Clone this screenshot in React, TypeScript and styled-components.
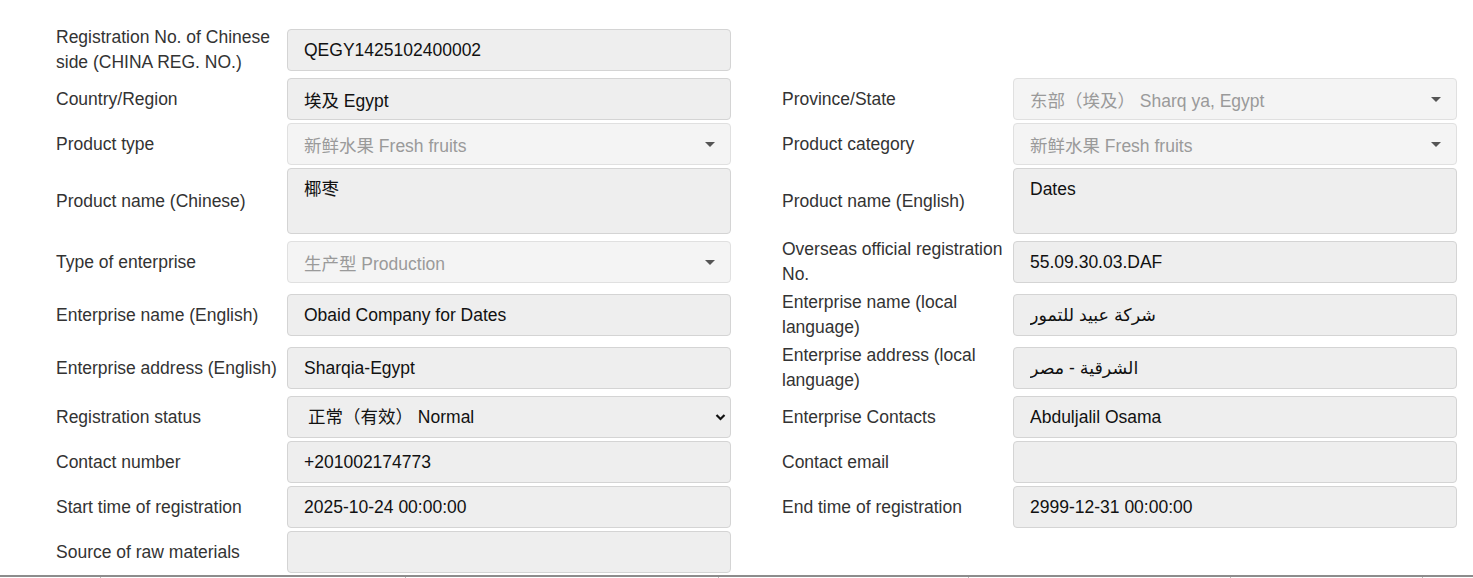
import styled, { createGlobalStyle } from 'styled-components';

const GlobalStyle = createGlobalStyle`
  html, body {
    margin: 0;
    padding: 0;
    background: #fff;
    overflow: hidden;
  }
  body {
    font-family: "Liberation Sans", Arial, "Noto Sans CJK SC", "DejaVu Sans", sans-serif;
    font-size: 17.5px;
    color: #333;
  }
`;

const Page = styled.div`
  height: 578px;
  overflow: hidden;
`;

const Form = styled.div`
  display: grid;
  grid-template-columns: 675px 675px;
  column-gap: 51px;
  row-gap: 3px;
  padding: 25px 0 0 56px;
`;

const Pair = styled.div`
  display: grid;
  grid-template-columns: 231px 444px;
  align-items: center;
`;

const Label = styled.div`
  line-height: 25px;
  padding-right: 6px;
  color: #333;
`;

const Field = styled.input<{ $muted?: boolean }>`
  box-sizing: border-box;
  width: 100%;
  height: 42px;
  margin: 0;
  padding: 0 16px;
  font: inherit;
  color: ${(p) => (p.$muted ? '#9a9a9a' : '#111')};
  background: ${(p) => (p.$muted ? '#f4f4f4' : '#eeeeee')};
  border: 1px solid ${(p) => (p.$muted ? '#e0e0e0' : '#d4d4d4')};
  border-radius: 4px;
  outline: none;
`;

const Area = styled.textarea`
  box-sizing: border-box;
  display: block;
  width: 100%;
  height: 66px;
  margin: 0;
  padding: 10px 16px;
  font: inherit;
  line-height: 20px;
  color: #111;
  background: #eeeeee;
  border: 1px solid #d4d4d4;
  border-radius: 4px;
  resize: none;
  outline: none;
`;

const DropWrap = styled.div`
  position: relative;
`;

const Caret = styled.span`
  position: absolute;
  right: 16px;
  top: 50%;
  margin-top: -2px;
  width: 0;
  height: 0;
  border-left: 5px solid transparent;
  border-right: 5px solid transparent;
  border-top: 5px solid #555;
  pointer-events: none;
`;

const Chevron = styled.svg`
  position: absolute;
  right: 5px;
  top: 50%;
  margin-top: -5px;
  pointer-events: none;
`;

const NativeSelect = styled.select`
  box-sizing: border-box;
  width: 100%;
  height: 42px;
  margin: 0;
  padding: 0 30px 0 20px;
  font: inherit;
  color: #111;
  background: #eeeeee;
  border: 1px solid #d4d4d4;
  border-radius: 4px;
  appearance: none;
  outline: none;
`;

const Strip = styled.div`
  display: grid;
  grid-template-columns: 100px 305px 313px 250px 262px 192px 51px;
  margin-top: 2px;
  border-top: 2px solid #8c8c8c;
  color: #333;
  font-size: 15px;
  line-height: 20px;
`;

const StripCell = styled.div<{ $first?: boolean }>`
  padding: 2px 12px;
  border-left: ${(p) => (p.$first ? 'none' : '1px solid #bbb')};
  white-space: nowrap;
  overflow: hidden;
`;

type Cell =
  | { kind: 'input'; label: string; value: string }
  | { kind: 'drop'; label: string; value: string }
  | { kind: 'native'; label: string; value: string }
  | { kind: 'area'; label: string; value: string }
  | null;

const rows: [Cell, Cell][] = [
  [{ kind: 'input', label: 'Registration No. of Chinese side (CHINA REG. NO.)', value: 'QEGY1425102400002' }, null],
  [
    { kind: 'input', label: 'Country/Region', value: '埃及 Egypt' },
    { kind: 'drop', label: 'Province/State', value: '东部（埃及） Sharq ya, Egypt' },
  ],
  [
    { kind: 'drop', label: 'Product type', value: '新鲜水果 Fresh fruits' },
    { kind: 'drop', label: 'Product category', value: '新鲜水果 Fresh fruits' },
  ],
  [
    { kind: 'area', label: 'Product name (Chinese)', value: '椰枣' },
    { kind: 'area', label: 'Product name (English)', value: 'Dates' },
  ],
  [
    { kind: 'drop', label: 'Type of enterprise', value: '生产型 Production' },
    { kind: 'input', label: 'Overseas official registration No.', value: '55.09.30.03.DAF' },
  ],
  [
    { kind: 'input', label: 'Enterprise name (English)', value: 'Obaid Company for Dates' },
    { kind: 'input', label: 'Enterprise name (local language)', value: 'شركة عبيد للتمور' },
  ],
  [
    { kind: 'input', label: 'Enterprise address (English)', value: 'Sharqia-Egypt' },
    { kind: 'input', label: 'Enterprise address (local language)', value: 'الشرقية - مصر' },
  ],
  [
    { kind: 'native', label: 'Registration status', value: '正常（有效） Normal' },
    { kind: 'input', label: 'Enterprise Contacts', value: 'Abduljalil Osama' },
  ],
  [
    { kind: 'input', label: 'Contact number', value: '+201002174773' },
    { kind: 'input', label: 'Contact email', value: '' },
  ],
  [
    { kind: 'input', label: 'Start time of registration', value: '2025-10-24 00:00:00' },
    { kind: 'input', label: 'End time of registration', value: '2999-12-31 00:00:00' },
  ],
  [{ kind: 'input', label: 'Source of raw materials', value: '' }, null],
];

function Control({ cell }: { cell: NonNullable<Cell> }) {
  switch (cell.kind) {
    case 'area':
      return <Area readOnly value={cell.value} />;
    case 'drop':
      return (
        <DropWrap>
          <Field $muted readOnly value={cell.value} />
          <Caret />
        </DropWrap>
      );
    case 'native':
      return (
        <DropWrap>
          <NativeSelect defaultValue={cell.value}>
            <option>{cell.value}</option>
          </NativeSelect>
          <Chevron width="11" height="10" viewBox="0 0 11 10">
            <path d="M1.5 3 L5.5 7 L9.5 3" fill="none" stroke="#111" strokeWidth="2.2" />
          </Chevron>
        </DropWrap>
      );
    default:
      return <Field readOnly value={cell.value} />;
  }
}

function FieldPair({ cell }: { cell: Cell }) {
  if (!cell) return <Pair />;
  return (
    <Pair>
      <Label>{cell.label}</Label>
      <Control cell={cell} />
    </Pair>
  );
}

const stripTexts = [
  '',
  '[Dates] Egypt registration record',
  '',
  '2026-05-27',
  '2999-12-31',
  '正常（有效） Normal',
  'View',
];

export default function App() {
  return (
    <Page>
      <GlobalStyle />
      <Form>
        {rows.flatMap(([left, right], i) => [
          <FieldPair key={'l' + i} cell={left} />,
          <FieldPair key={'r' + i} cell={right} />,
        ])}
      </Form>
      <Strip>
        {stripTexts.map((t, i) => (
          <StripCell key={i} $first={i === 0}>
            {t}
          </StripCell>
        ))}
      </Strip>
    </Page>
  );
}
